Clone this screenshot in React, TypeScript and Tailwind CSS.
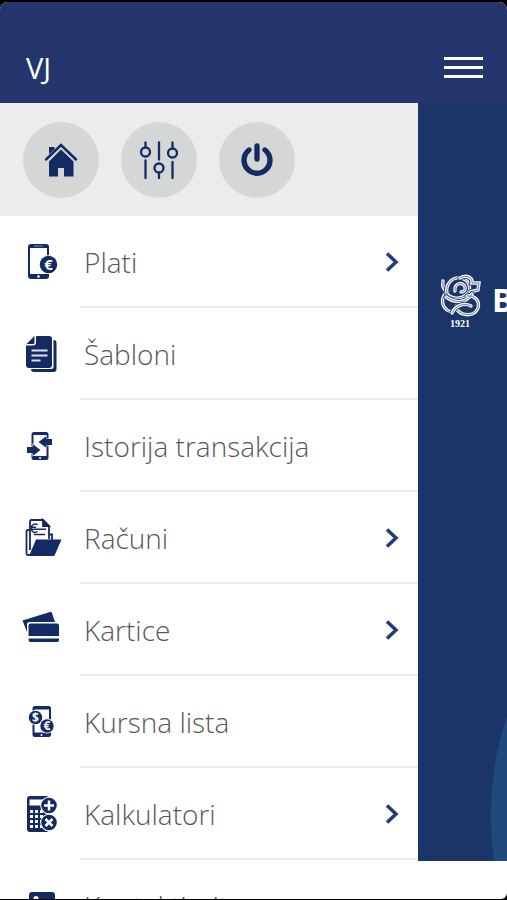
import type { ReactNode } from 'react';

interface MenuItem {
  label: string;
  icon: ReactNode;
  hasChildren?: boolean;
}

interface CoinProps {
  cx: number;
  cy: number;
  r: number;
  symbol: string;
  size: number;
}

const NAVY = '#142a63';

function Coin({ cx, cy, r, symbol, size }: CoinProps) {
  return (
    <>
      <circle cx={cx} cy={cy} r={r} fill={NAVY} stroke="#fff" strokeWidth="1.6" style={{ paintOrder: 'stroke' }} />
      <text
        x={cx}
        y={cy + size * 0.36}
        textAnchor="middle"
        fontSize={size}
        fontWeight="700"
        fontFamily="'Open Sans', sans-serif"
        fill="#fff"
      >
        {symbol}
      </text>
    </>
  );
}

const PayIcon = () => (
  <svg viewBox="0 0 40 40" className="size-10" aria-hidden="true">
    <rect x="6" y="2" width="21" height="35" rx="3" fill={NAVY} />
    <rect x="8" y="6" width="17" height="26" fill="#fff" />
    <path d="M12 4h9" stroke="#8993b4" />
    <circle cx="16.5" cy="34.5" r="1.3" fill="#fff" />
    <Coin cx={26.5} cy={22.5} r={8.7} symbol="€" size={15} />
  </svg>
);

const TemplatesIcon = () => (
  <svg viewBox="0 0 40 40" className="size-10" aria-hidden="true">
    <path d="M31.5 6a3 3 0 0 1 3 3v26a3 3 0 0 1-3 3H12a3 3 0 0 1-3-3h20a2.5 2.5 0 0 0 2.5-2.5z" fill={NAVY} />
    <path d="M14 2h13a3 3 0 0 1 3 3v26a3 3 0 0 1-3 3H7a3 3 0 0 1-3-3V11.5h7a3 3 0 0 0 3-3z" fill={NAVY} />
    <path d="M12.5 2v6.500a1.500 1.500 0 0 1-1.500 1.500H4.500z" fill={NAVY} />
    <path d="M9.5 16.5h16M9.5 21.5h16M9.5 26.5h9" stroke="#dfe3ee" strokeWidth="2" />
  </svg>
);

const HistoryIcon = () => (
  <svg viewBox="0 0 40 40" className="size-10" aria-hidden="true">
    <rect x="9.5" y="6" width="17" height="28" rx="2.5" fill={NAVY} />
    <rect x="11.5" y="9" width="13" height="21" fill="#fff" />
    <circle cx="18" cy="32" r="1" fill="#fff" />
    <g fill={NAVY} stroke="#fff" strokeWidth="1" style={{ paintOrder: 'stroke' }}>
      <path d="M30 13v6h-5.500v3L16.500 16l8-6v3z" />
      <path d="M5 21v6h5.500v3l8-6-8-6v3z" />
    </g>
  </svg>
);

const AccountsIcon = () => (
  <svg viewBox="0 0 40 40" className="size-10" fill="none" stroke={NAVY} strokeWidth="1.8" aria-hidden="true">
    <path d="M7 12H6a1.500 1.500 0 0 0-1.500 1.500v22A1.500 1.500 0 0 0 6 37h23" />
    <path d="M8 32V3.500A1.500 1.500 0 0 1 9.500 2H21l6 6v13" />
    <path d="M21 2v6h6z" fill={NAVY} />
    <path d="M28 16.500h2V22" />
    <path d="M15.500 7a4 4 0 1 0 0 6.500M9 9.300h5M9 11.300h15M12 16.500h11" strokeWidth="1.5" />
    <path d="M14 21.500h25.500L33 36.500a2 2 0 0 1-2 1.500H7z" fill={NAVY} stroke="none" />
  </svg>
);

const CardsIcon = () => (
  <svg viewBox="0 0 40 40" className="size-10" fill={NAVY} aria-hidden="true">
    <path d="M.5 10.500 28 2a1.500 1.500 0 0 1 2 1l3 9H7.500a2.500 2.500 0 0 0-2.500 2.500V22z" />
    <path d="M8.500 13.500H35a2 2 0 0 1 2 2V26H6.500V15.500a2 2 0 0 1 2-2z" />
    <path d="M6.500 28.500H37V30a2 2 0 0 1-2 2H8.500a2 2 0 0 1-2-2z" />
  </svg>
);

const RatesIcon = () => (
  <svg viewBox="0 0 40 40" className="size-10" aria-hidden="true">
    <rect x="10.5" y="4" width="18.5" height="31" rx="2.5" fill={NAVY} />
    <rect x="12.5" y="7.5" width="14.5" height="23" fill="#fff" />
    <circle cx="19.5" cy="33" r="1" fill="#fff" />
    <Coin cx={13.5} cy={15.5} r={6.7} symbol="$" size={12} />
    <Coin cx={25} cy={24} r={6.7} symbol="€" size={12} />
  </svg>
);

const CalculatorIcon = () => (
  <svg viewBox="0 0 40 40" className="size-10" aria-hidden="true">
    <rect x="5" y="2" width="22" height="36" rx="3" fill={NAVY} />
    <rect x="7.5" y="5.5" width="17" height="6" fill="#fff" />
    <path d="M9.5 16v18M14.5 16v18M19.5 16v18" stroke="#fff" strokeWidth="3" strokeDasharray="3 2" />
    <g fill={NAVY} stroke="#fff" strokeWidth="2" style={{ paintOrder: 'stroke' }}>
      <circle cx="27" cy="11.5" r="7.8" />
      <circle cx="27" cy="28.5" r="7.8" />
    </g>
    <path d="M27 6.500v10M22 11.500h10M23.500 25l7 7M30.500 25l-7 7" stroke="#fff" strokeWidth="2.5" />
  </svg>
);

const ContactIcon = () => (
  <svg viewBox="0 0 40 40" className="size-10" aria-hidden="true">
    <rect x="7" y="6" width="26" height="31" rx="3" fill={NAVY} />
    <circle cx="14" cy="12.5" r="2.5" fill="#fff" />
  </svg>
);

const HomeIcon = () => (
  <svg viewBox="0 0 40 40" className="size-10" fill={NAVY} aria-hidden="true">
    <path d="M8 14V7h5.500v2.500z" />
    <path d="M5 19.500 20 5l15 14.500" fill="none" stroke={NAVY} strokeWidth="2.5" strokeLinecap="round" />
    <path d="M20 9.500 32.500 21.500v15H23V28h-6v8.500H8v-15z" />
  </svg>
);

const SlidersIcon = () => (
  <svg viewBox="0 0 40 40" className="size-10" fill="none" stroke={NAVY} strokeWidth="2.3" strokeLinecap="round" aria-hidden="true">
    <path d="M6.500 2.500V7M6.500 20.500V38M20 2.500v17M20 33v5M33.500 2.500V8M33.500 22v16" />
    <circle cx="6.5" cy="12" r="4.5" />
    <circle cx="20" cy="28" r="4.5" />
    <circle cx="33.5" cy="13" r="4.5" />
  </svg>
);

const PowerIcon = () => (
  <svg viewBox="0 0 40 40" className="size-10" fill="none" stroke={NAVY} strokeWidth="5.3" strokeLinecap="round" aria-hidden="true">
    <path d="M20 6v13M12 10a13 13 0 1 0 16 0" />
  </svg>
);

const emblemLines = [
  'M5 7c-1 5 1 9 4 11-6 5-6 13 0 18 4 3 9 1 9-4',
  'M9 20C7 10 14 3 22 4c9 1 12 10 7 16-5 5-14 6-20 0z',
  'M17 17c-1-8 8-10 10-4 1 3-1 5-4 5',
  'M22 4c7-4 13 0 12 5h7l-1 7-8 2',
  'M8 23c10 7 20 6 26-3M29 22c8-1 13 5 11 12-3 8-14 9-21 2',
  'M14 39c3-7 12-11 19-7',
];

const Emblem = () => (
  <svg viewBox="0 0 44 44" className="size-11" fill="none" strokeLinecap="round" aria-hidden="true">
    {emblemLines.map((d) => (
      <g key={d}>
        <path d={d} stroke="#1b3569" strokeWidth="5" />
        <path d={d} stroke="#f4f6fa" strokeWidth="3.4" />
        <path d={d} stroke="#4a5f8d" strokeWidth="0.8" />
      </g>
    ))}
  </svg>
);

const menuItems: MenuItem[] = [
  { label: 'Plati', icon: <PayIcon />, hasChildren: true },
  { label: 'Šabloni', icon: <TemplatesIcon /> },
  { label: 'Istorija transakcija', icon: <HistoryIcon /> },
  { label: 'Računi', icon: <AccountsIcon />, hasChildren: true },
  { label: 'Kartice', icon: <CardsIcon />, hasChildren: true },
  { label: 'Kursna lista', icon: <RatesIcon /> },
  { label: 'Kalkulatori', icon: <CalculatorIcon />, hasChildren: true },
  { label: 'Kontaktirajte nas', icon: <ContactIcon /> },
];

const quickActions = [
  { label: 'Početna', icon: <HomeIcon /> },
  { label: 'Podešavanja', icon: <SlidersIcon /> },
  { label: 'Odjava', icon: <PowerIcon /> },
];

function MenuRow({ item }: { item: MenuItem }) {
  return (
    <li>
      <a href="#" className="flex h-[92px] items-stretch pl-[22px]">
        <span className="flex w-[58px] shrink-0 items-center">{item.icon}</span>
        <span className="flex min-w-0 flex-1 items-center justify-between border-b-2 border-[#ededee] pt-0.5 pr-[18px] pl-1">
          <span className="text-[28px] leading-10 font-light whitespace-nowrap text-[#58585a]">{item.label}</span>
          {item.hasChildren && (
            <svg viewBox="0 0 16 20" className="h-5 w-4" fill="none" stroke="#223a78" strokeWidth="3.5" aria-hidden="true">
              <path d="M3 1.500 12 10l-9 8.500" />
            </svg>
          )}
        </span>
      </a>
    </li>
  );
}

export default function App() {
  return (
    <div className="h-screen overflow-hidden bg-black pt-0.5 pb-px font-['Open_Sans',sans-serif]">
      <div className="flex h-full flex-col overflow-hidden rounded-t-lg rounded-br-md bg-white">
        <header className="flex h-[101px] shrink-0 items-end justify-between bg-[#25356e] pr-6 pb-[17px] pl-[26px]">
          <span className="text-[29px] leading-9 text-white">VJ</span>
          <button type="button" aria-label="Meni" className="mb-2 flex w-[39px] flex-col gap-1.5">
            <span className="h-[3px] bg-white" />
            <span className="h-[3px] bg-white" />
            <span className="h-[3px] bg-white" />
          </button>
        </header>

        <div className="flex min-h-0 flex-1">
          <nav className="flex min-w-0 flex-1 flex-col overflow-hidden bg-white">
            <div className="flex h-[113px] shrink-0 items-center gap-[22px] bg-[#edecec] pl-[23px]">
              {quickActions.map((action) => (
                <button
                  key={action.label}
                  type="button"
                  aria-label={action.label}
                  className="flex size-[76px] items-center justify-center rounded-full bg-[#d5d6d6]"
                >
                  {action.icon}
                </button>
              ))}
            </div>
            <ul>
              {menuItems.map((item) => (
                <MenuRow key={item.label} item={item} />
              ))}
            </ul>
          </nav>

          <main className="mb-[38px] flex w-[89px] shrink-0 flex-col justify-between overflow-hidden bg-[#1b3569] pt-[171px]">
            <div className="flex items-start gap-2.5 pl-5 text-white">
              <div className="flex shrink-0 flex-col items-center">
                <Emblem />
                <span className="font-['Liberation_Serif',serif] text-[10px] leading-3 font-bold">1921</span>
              </div>
              <span className="pt-1.5 text-[32px] leading-10 font-bold">B</span>
            </div>
            <svg viewBox="0 0 89 150" className="h-[150px] w-[89px]" aria-hidden="true">
              <ellipse cx="153" cy="105" rx="80" ry="165" fill="#1e4b7c" />
            </svg>
          </main>
        </div>
      </div>
    </div>
  );
}
